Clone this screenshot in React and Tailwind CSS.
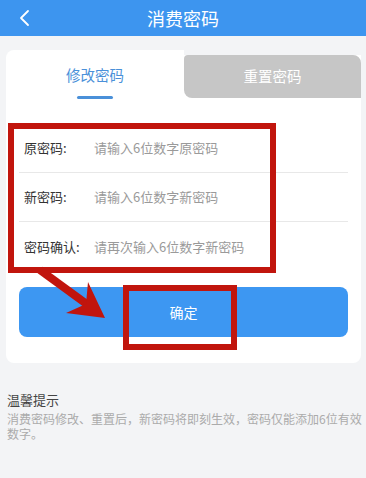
import React from 'react';

const rows = [
  { label: '原密码:', placeholder: '请输入6位数字原密码' },
  { label: '新密码:', placeholder: '请输入6位数字新密码' },
  { label: '密码确认:', placeholder: '请再次输入6位数字新密码' },
];

export default function App() {
  return (
    <div
      className="relative w-[366px] h-[478px] overflow-hidden bg-[#f3f4f6]"
      style={{ fontFamily: '"Noto Sans CJK SC", "Noto Sans", sans-serif' }}
    >
      {/* Header */}
      <div className="relative h-[36px] bg-[#3d95ef] flex items-center justify-center">
        <svg className="absolute left-[19px] top-[9px]" width="12" height="18" viewBox="0 0 12 18">
          <polyline points="9,2 2,9 9,16" fill="none" stroke="#fff" strokeWidth="1.8" strokeLinecap="round" strokeLinejoin="round" />
        </svg>
        <span className="text-white text-[18px] leading-none">消费密码</span>
      </div>

      {/* Card */}
      <div className="relative mx-[6px] mt-[14px] w-[355px]">
        <div className="flex">
          <div className="w-[178px] h-[50px] bg-white rounded-tl-lg flex flex-col items-center">
            <span className="mt-[18px] text-[14.5px] leading-none text-[#4a90d9]">修改密码</span>
            <div className="mt-[13px] w-[36px] h-[3px] bg-[#4a90d9] rounded-full" />
          </div>
          <div className="flex-1 mt-[5px] h-[45px] bg-white">
            <div className="h-[43px] bg-[#c6c6c6] rounded-tr-lg rounded-bl-lg rounded-tl-sm flex items-center justify-center">
              <span className="text-white text-[14.5px] leading-none">重置密码</span>
            </div>
          </div>
        </div>

        <div className="bg-white rounded-b-lg px-[13px] pt-[24px] pb-[26px]">
          <div className="flex flex-col">
            {rows.map((r, i) => (
              <div
                key={r.label}
                className={`h-[49px] flex items-center pl-[5px] ${i < rows.length - 1 ? 'border-b border-[#e8e8e8]' : ''}`}
              >
                <span className="w-[70px] text-[13px] text-[#333]">{r.label}</span>
                <span className="text-[13px] text-[#9a9a9a]">{r.placeholder}</span>
              </div>
            ))}
          </div>
          <button className="mt-[16px] w-full h-[50px] rounded-lg bg-[#3d97f2] text-white text-[14px]">
            确定
          </button>
        </div>

        {/* Annotation boxes */}
        <div className="absolute left-[2px] top-[73px] w-[268px] h-[150px] border-[6px] border-[#c1150d] pointer-events-none" />
        <div className="absolute left-[117px] top-[235px] w-[114px] h-[65px] border-[6px] border-[#c1150d] pointer-events-none" />
      </div>

      {/* Arrow annotation */}
      <svg className="absolute left-0 top-0 pointer-events-none" width="366" height="478" viewBox="0 0 366 478">
        <line x1="40" y1="270" x2="88" y2="305" stroke="#c1150d" strokeWidth="8" />
        <polygon points="88,282 105,318 66,313 86,304" fill="#c1150d" />
      </svg>

      {/* Tips */}
      <div className="pl-[7px] pr-[3px] mt-[28px]">
        <div className="text-[13px] leading-[18px] text-[#444] mb-[2px]">温馨提示</div>
        <p className="text-[12px] leading-[15px] text-[#ababab]">
          消费密码修改、重置后，新密码将即刻生效，密码仅能添加6位有效数字。
        </p>
      </div>
    </div>
  );
}
